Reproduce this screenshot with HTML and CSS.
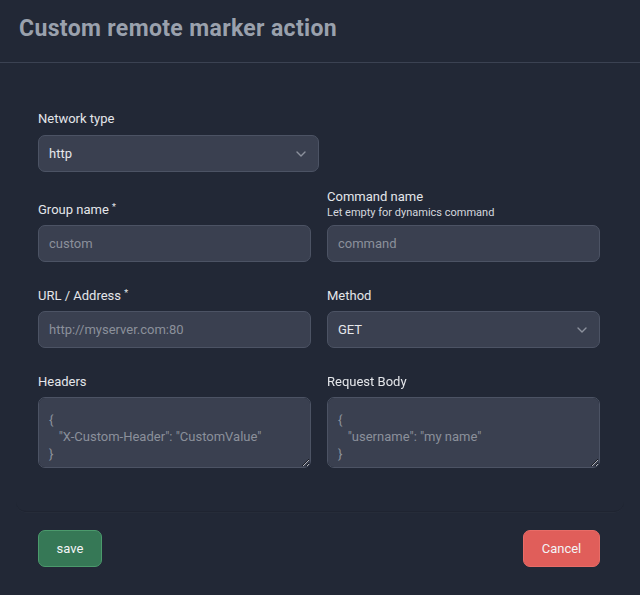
FILE: index.html
```html
<!DOCTYPE html>
<html lang="en">
<head>
<meta charset="utf-8">
<title>Custom remote marker action</title>
<link rel="stylesheet" href="styles.css">
</head>
<body>
<div class="modal">
  <header class="modal-header">
    <h1 class="modal-title">Custom remote marker action</h1>
  </header>
  <div class="modal-body">
    <div class="field half">
      <label class="label">Network type</label>
      <div class="select">
        <span class="select-value">http</span>
        <svg class="chevron" width="10" height="6" viewBox="0 0 10 6"><path d="M1 1l4 4 4-4" fill="none" stroke="currentColor" stroke-width="1.4" stroke-linecap="round" stroke-linejoin="round"/></svg>
      </div>
    </div>
    <div class="grid">
      <div class="field">
        <div class="label-wrap"><label class="label">Group name <sup class="req">*</sup></label></div>
        <input class="input" type="text" placeholder="custom">
      </div>
      <div class="field">
        <div class="label-wrap">
          <label class="label">Command name</label>
          <span class="hint">Let empty for dynamics command</span>
        </div>
        <input class="input" type="text" placeholder="command">
      </div>
      <div class="field">
        <div class="label-wrap"><label class="label">URL / Address <sup class="req">*</sup></label></div>
        <input class="input" type="text" placeholder="http://myserver.com:80">
      </div>
      <div class="field">
        <div class="label-wrap"><label class="label">Method</label></div>
        <div class="select">
          <span class="select-value">GET</span>
          <svg class="chevron" width="10" height="6" viewBox="0 0 10 6"><path d="M1 1l4 4 4-4" fill="none" stroke="currentColor" stroke-width="1.4" stroke-linecap="round" stroke-linejoin="round"/></svg>
        </div>
      </div>
      <div class="field">
        <div class="label-wrap"><label class="label">Headers</label></div>
        <textarea class="textarea" placeholder="{
   &quot;X-Custom-Header&quot;: &quot;CustomValue&quot;
}"></textarea>
      </div>
      <div class="field">
        <div class="label-wrap"><label class="label">Request Body</label></div>
        <textarea class="textarea" placeholder="{
   &quot;username&quot;: &quot;my name&quot;
}"></textarea>
      </div>
    </div>
  </div>
  <footer class="modal-footer">
    <button class="btn btn-save" type="button">save</button>
    <button class="btn btn-cancel" type="button">Cancel</button>
  </footer>
</div>
</body>
</html>
```
FILE: styles.css
```css
* { box-sizing: border-box; }
html, body {
  margin: 0;
  padding: 0;
  background: #222836;
}
body {
  font-family: Roboto, "Liberation Sans", sans-serif;
  color: #e5e7eb;
  width: 640px;
  height: 595px;
  overflow: hidden;
}
.modal-header {
  height: 63px;
  border-bottom: 1px solid #3b4252;
  padding: 14px 19px 0;
}
.modal-title {
  margin: 0;
  font-size: 23px;
  font-weight: 700;
  color: #9aa1ad;
  letter-spacing: 0.35px;
  line-height: 30px;
}
.modal-body {
  margin: 0 16px;
  padding: 47px 24px 43px 22px;
  border-bottom: 1px solid #1f2431;
  border-radius: 0 0 10px 10px;
  box-shadow: 0 1px 0 rgba(255,255,255,0.02);
}
.field {
  display: flex;
  flex-direction: column;
}
.half {
  width: 50%;
}
.label {
  font-size: 13px;
  line-height: 18px;
  color: #e4e6ea;
}
.req {
  font-size: 9px;
  vertical-align: top;
  position: relative;
  top: -3px;
}
.label-wrap {
  height: 36px;
  display: flex;
  flex-direction: column;
  justify-content: flex-end;
  padding-bottom: 6px;
}
.half .label {
  margin-bottom: 7px;
}
.hint {
  font-size: 11px;
  line-height: 13px;
  color: #d5d8de;
}
.grid {
  margin-top: 17px;
  display: grid;
  grid-template-columns: 1fr 1fr;
  column-gap: 16px;
  row-gap: 13px;
}
.select,
.input,
.textarea {
  background: #3a4050;
  border: 1px solid #4c5364;
  border-radius: 7px;
  height: 37px;
  font-family: inherit;
  font-size: 13px;
  color: #e5e7eb;
  width: 100%;
}
.select {
  display: flex;
  align-items: center;
  justify-content: space-between;
  padding: 0 12px 0 10px;
}
.chevron {
  color: #8c919d;
  margin-top: 1px;
}
.input {
  padding: 0 10px;
  outline: none;
}
.input::placeholder,
.textarea::placeholder {
  color: #8b909b;
  opacity: 1;
}
.textarea {
  height: 71px;
  resize: vertical;
  padding: 13px 10px 6px;
  line-height: 17px;
  outline: none;
  color-scheme: dark;
}
.modal-footer {
  display: flex;
  justify-content: space-between;
  padding: 18px 40px 0 38px;
}
.btn {
  height: 37px;
  border-radius: 7px;
  font-family: inherit;
  font-size: 13px;
  color: #f3f4f6;
  cursor: pointer;
}
.btn-save {
  width: 64px;
  background: #367856;
  border: 1px solid #4b9a6c;
}
.btn-cancel {
  width: 77px;
  background: #e05e5a;
  border: 1px solid #e86c67;
}
```
